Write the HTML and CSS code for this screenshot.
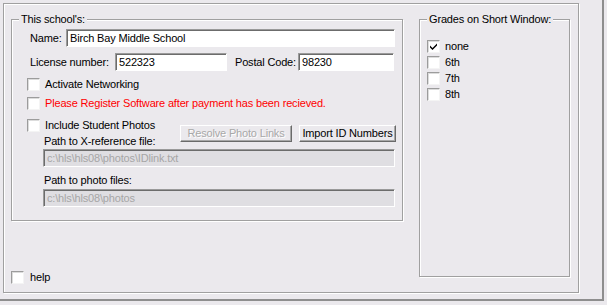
FILE: index.html
```html
<!DOCTYPE html>
<html>
<head>
<meta charset="utf-8">
<link rel="stylesheet" href="styles.css">
</head>
<body>
<div class="window">
  <div class="frame">
    <div class="left-col">
      <fieldset class="group school">
        <legend>This school's:</legend>
        <div class="group-body school-body">
          <div class="row row-name">
            <label class="lbl lbl-name">Name:</label>
            <input class="field field-name" type="text" value="Birch Bay Middle School">
          </div>
          <div class="row row-lic">
            <label class="lbl lbl-lic">License number:</label>
            <input class="field field-lic" type="text" value="522323">
            <label class="lbl lbl-postal">Postal Code:</label>
            <input class="field field-postal" type="text" value="98230">
          </div>
          <div class="check-row cr-net"><span class="cb"></span><span class="ct">Activate Networking</span></div>
          <div class="check-row cr-reg"><span class="cb"></span><span class="ct red">Please Register Software after payment has been recieved.</span></div>
          <div class="photos">
            <div class="check-row cr-photo"><span class="cb"></span><span class="ct">Include Student Photos</span></div>
            <div class="path-lbl">Path to X-reference file:</div>
            <button class="btn btn-resolve" disabled>Resolve Photo Links</button>
            <button class="btn btn-import">Import ID Numbers</button>
          </div>
          <input class="field field-path" type="text" value="c:\hls\hls08\photos\IDlink.txt" disabled>
          <div class="path-lbl path-lbl2">Path to photo files:</div>
          <input class="field field-path field-path2" type="text" value="c:\hls\hls08\photos" disabled>
        </div>
      </fieldset>
      <div class="check-row cr-help"><span class="cb"></span><span class="ct">help</span></div>
    </div>
    <fieldset class="group grades">
      <legend>Grades on Short Window:</legend>
      <div class="group-body grade-list">
        <div class="check-row"><span class="cb"><svg class="tick" width="9" height="9" viewBox="0 0 9 9"><path d="M1 3.5 L3.5 6 L8 1.5 L8 3.5 L3.5 8 L1 5.5 Z" fill="#000"/></svg></span><span class="ct">none</span></div>
        <div class="check-row"><span class="cb"></span><span class="ct">6th</span></div>
        <div class="check-row"><span class="cb"></span><span class="ct">7th</span></div>
        <div class="check-row"><span class="cb"></span><span class="ct">8th</span></div>
      </div>
    </fieldset>
  </div>
</div>
</body>
</html>
```

FILE: styles.css
```css
html, body {
  margin: 0;
  padding: 0;
  background: #ebe9ed;
}
body {
  font-family: "Liberation Sans", Arial, sans-serif;
  font-size: 11px;
  line-height: 13px;
  letter-spacing: -0.17px;
  color: #000;
}
.window {
  box-sizing: border-box;
  width: 604px;
  height: 301px;
  padding: 3px;
  border-right: 2px solid #8e8e8e;
  border-bottom: 2px solid #8e8e8e;
}
.frame {
  box-sizing: border-box;
  width: 576px;
  height: 290px;
  border: 1px solid #a0a0a0;
  box-shadow: inset 1px 1px 0 #fff, 1px 1px 0 #fff;
  display: flex;
  align-items: flex-start;
  padding: 9px 0 0 7px;
  gap: 16px;
}
.left-col {
  display: flex;
  flex-direction: column;
  width: 392px;
  height: 272px;
}
.group {
  box-sizing: border-box;
  margin: 0;
  padding: 0;
  min-width: 0;
  border: 1px solid #a0a0a0;
  box-shadow: inset 1px 1px 0 #fff, 1px 1px 0 #fff;
}
.group legend {
  margin-left: 7px;
  padding: 0 2px;
  line-height: 13px;
  background: #ebe9ed;
}
.school {
  width: 392px;
  height: 208px;
}
.school-body {
  display: flex;
  flex-direction: column;
  padding: 0 7px 0 15px;
}
.row {
  display: flex;
  align-items: center;
  height: 18px;
}
.row-name { margin-top: 3px; padding-left: 3px; }
.row-lic { margin-top: 6px; padding-left: 3px; }
.lbl-name { width: 36px; }
.lbl-lic { width: 85px; }
.lbl-postal { width: 63px; margin-left: 8px; }
.field {
  box-sizing: border-box;
  height: 18px;
  margin: 0;
  padding: 0 2px 0 3px;
  font-family: inherit;
  font-size: 11px;
  letter-spacing: -0.17px;
  color: #000;
  background: #fff;
  border: 1px solid;
  border-color: #9a9a9a #ffffff #ffffff #9a9a9a;
  box-shadow: inset 1px 1px 0 #6c6c6c;
  outline: none;
}
.field-name { flex: 1; }
.field-lic { width: 112px; }
.field-postal { width: 96px; }
.field:disabled {
  background: #dfdee2;
  color: #a6a6a6;
}
.check-row {
  display: flex;
  align-items: center;
  height: 13px;
}
.cb {
  box-sizing: border-box;
  width: 13px;
  height: 13px;
  flex: none;
  background: #fff;
  border: 1px solid;
  border-color: #9c9c9c #f4f4f4 #f4f4f4 #9c9c9c;
  box-shadow: inset 1px 1px 0 #dcdcdc;
  display: flex;
  align-items: center;
  justify-content: center;
}
.ct { margin-left: 5px; white-space: nowrap; }
.red { color: #ff0000; }
.cr-net { margin-top: 7px; }
.cr-reg { margin-top: 6px; }
.photos {
  display: grid;
  grid-template-columns: 1fr auto auto;
  grid-template-rows: 13px 16px;
  column-gap: 7px;
  margin-top: 9px;
}
.cr-photo { grid-column: 1; grid-row: 1; }
.photos .path-lbl { grid-column: 1; grid-row: 2; align-self: end; }
.path-lbl { padding-left: 17px; line-height: 13px; }
.btn {
  grid-row: 1 / 3;
  align-self: start;
  margin: 6px 0 0 0;
  box-sizing: border-box;
  height: 17px;
  padding: 0;
  white-space: nowrap;
  font-family: inherit;
  font-size: 11px;
  line-height: 13px;
  letter-spacing: -0.17px;
  color: #000;
  background: #ebe9ed;
  border: 1px solid;
  border-color: #ffffff #6a6a6a #6a6a6a #ffffff;
  box-shadow: inset -1px -1px 0 #a8a8a8;
  border-radius: 0;
}
.btn-resolve { width: 112px; }
.btn-import { width: 97px; margin-right: -1px; }
.btn:disabled {
  color: #a8a8a8;
  text-shadow: 1px 1px 0 #fff;
}
.field-path { margin-top: 1px; width: 352px; margin-left: 16px; }
.path-lbl2 { margin-top: 7px; }
.field-path2 { margin-top: 2px; }
.cr-help { margin-top: auto; margin-bottom: 1px; }
.cr-help .ct { margin-left: 6px; }
.grades {
  width: 151px;
  height: 264px;
}
.grade-list {
  display: flex;
  flex-direction: column;
  gap: 3px;
  margin-top: 14px;
  padding-left: 7px;
}
.tick { display: block; }
```
